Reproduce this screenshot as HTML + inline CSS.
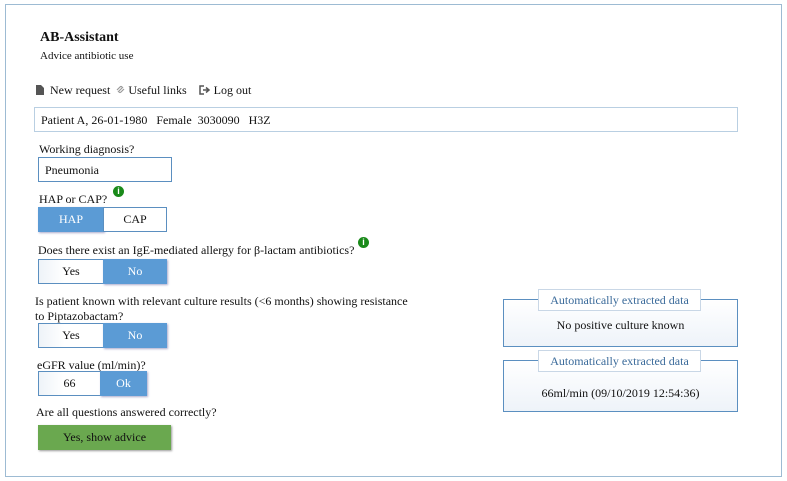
<!DOCTYPE html>
<html><head><style>
body{margin:0;width:787px;height:481px;background:#fff;font-family:"Liberation Serif",serif;color:#111;position:relative;overflow:hidden}
.a{position:absolute;white-space:nowrap}
.frame{position:absolute;left:5px;top:4px;width:775px;height:471px;border:1px solid #9dbbd3}
.box{position:absolute;border:1px solid #5b8fc0;box-sizing:border-box;font-size:12px;text-align:center;background:linear-gradient(90deg,#eef3f8,#fff 40%)}
.sel{position:absolute;background:#5b9bd5;color:#fff;font-size:12px;text-align:center;box-sizing:border-box;box-shadow:1px 1px 2px #aac}
.t{font-size:12px}
.info{position:absolute;width:11px;height:11px;border-radius:50%;background:#1a8a1a;color:#fff;font:bold 9px "Liberation Sans",sans-serif;text-align:center;line-height:11px}
.fs{position:absolute;border:1px solid #5b8fc0;box-sizing:border-box;background:linear-gradient(180deg,#fff,#eef3f9);font-size:12px;text-align:center}
.lg{position:absolute;background:#fff;border:1px solid #c9d7e6;box-sizing:border-box;color:#3a6a9a;font-size:12px;text-align:center;line-height:20px}
</style></head><body>
<div class="frame"></div>
<div class="a" style="left:40px;top:30px;font-size:14px;font-weight:bold">AB-Assistant</div>
<div class="a" style="left:40px;top:50px;font-size:11px">Advice antibiotic use</div>
<div class="a t" style="left:36px;top:83px">
<svg width="8" height="10" style="vertical-align:-1px"><path d="M0 0H5L8 3V10H0Z" fill="#555"/></svg>&nbsp; New request &nbsp;<svg width="9" height="9" style="vertical-align:0"><path d="M2 7L7 2M1 5L4 2Q5 1 6 2M8 4L5 7Q4 8 3 7" stroke="#999" fill="none" stroke-width="1.2"/></svg> Useful links &nbsp;&nbsp; <svg width="12" height="10" style="vertical-align:-1px"><path d="M5 1H1V9H5" stroke="#555" fill="none" stroke-width="1.5"/><path d="M4 5H9M7 2.5L10 5L7 7.5" stroke="#555" fill="none" stroke-width="1.5"/></svg> Log out</div>
<div class="box" style="left:34px;top:107px;width:704px;height:25px;text-align:left;padding-left:6px;line-height:24px;background:#fff;border-color:#b9cfe2">Patient A, 26-01-1980 &nbsp; Female &nbsp;3030090 &nbsp; H3Z</div>
<div class="a t" style="left:39px;top:142px">Working diagnosis?</div>
<div class="box" style="left:38px;top:157px;width:134px;height:25px;text-align:left;padding-left:6px;line-height:24px;background:#fff">Pneumonia</div>
<div class="a t" style="left:39px;top:192px">HAP or CAP?</div><div class="info" style="left:113px;top:186px">i</div>
<div class="sel" style="left:38px;top:207px;width:66px;height:25px;line-height:25px">HAP</div>
<div class="box" style="left:103px;top:207px;width:64px;height:25px;line-height:23px;background:#fff">CAP</div>
<div class="a t" style="left:38px;top:243px">Does there exist an IgE-mediated allergy for β-lactam antibiotics?</div><div class="info" style="left:358px;top:237px">i</div>
<div class="box" style="left:38px;top:259px;width:66px;height:25px;line-height:23px">Yes</div>
<div class="sel" style="left:103px;top:259px;width:64px;height:25px;line-height:25px">No</div>
<div class="a t" style="left:35px;top:294px;line-height:15px">Is patient known with relevant culture results (&lt;6 months) showing resistance<br>to Piptazobactam?</div>
<div class="box" style="left:38px;top:323px;width:66px;height:25px;line-height:23px">Yes</div>
<div class="sel" style="left:103px;top:323px;width:64px;height:25px;line-height:25px">No</div>
<div class="a t" style="left:37px;top:358px">eGFR value (ml/min)?</div>
<div class="box" style="left:38px;top:371px;width:63px;height:25px;line-height:23px">66</div>
<div class="sel" style="left:100px;top:371px;width:47px;height:25px;line-height:25px">Ok</div>
<div class="a t" style="left:36px;top:405px">Are all questions answered correctly?</div>
<div class="sel" style="left:38px;top:425px;width:133px;height:25px;line-height:25px;background:#6aa84f;color:#111;box-shadow:1px 1px 2px #999">Yes, show advice</div>
<div class="fs" style="left:503px;top:299px;width:235px;height:48px;line-height:50px">No positive culture known</div>
<div class="lg" style="left:538px;top:289px;width:163px;height:22px">Automatically extracted data</div>
<div class="fs" style="left:503px;top:360px;width:235px;height:52px;line-height:64px">66ml/min (09/10/2019 12:54:36)</div>
<div class="lg" style="left:538px;top:350px;width:163px;height:22px">Automatically extracted data</div>
</body></html>
